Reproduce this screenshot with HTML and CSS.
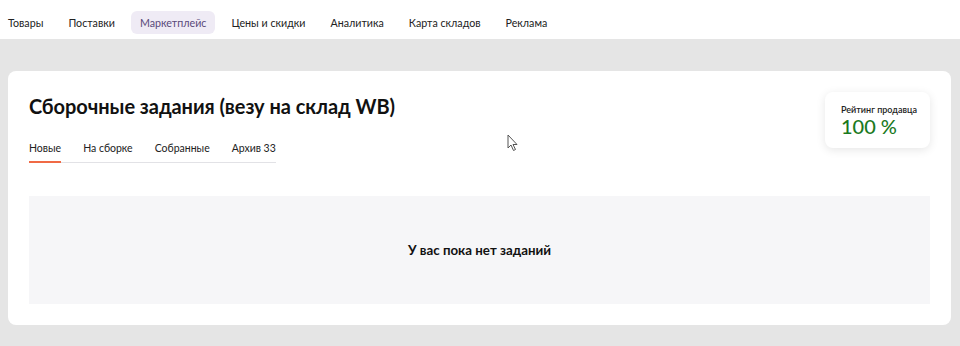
FILE: index.html
```html
<!DOCTYPE html>
<html lang="ru">
<head>
<meta charset="utf-8">
<link rel="stylesheet" href="styles.css">
</head>
<body>
<nav class="topnav">
  <a class="nav-item">Товары</a>
  <a class="nav-item">Поставки</a>
  <a class="nav-item active">Маркетплейс</a>
  <a class="nav-item">Цены и скидки</a>
  <a class="nav-item">Аналитика</a>
  <a class="nav-item">Карта складов</a>
  <a class="nav-item">Реклама</a>
</nav>
<main class="page">
  <section class="card">
    <div class="card-head">
      <div class="head-left">
        <h1 class="title">Сборочные задания (везу на склад WB)</h1>
        <div class="tabs">
          <span class="tab active">Новые</span>
          <span class="tab">На сборке</span>
          <span class="tab">Собранные</span>
          <span class="tab">Архив 33</span>
        </div>
      </div>
      <div class="rating">
        <div class="rating-label">Рейтинг продавца</div>
        <div class="rating-value">100 %</div>
      </div>
    </div>
    <div class="empty">У вас пока нет заданий</div>
  </section>
</main>
<svg class="cursor" width="12" height="18" viewBox="0 0 12 18"><path d="M1 1 L1 14 L4 11 L6.5 16.5 L8.5 15.5 L6 10.5 L10 10.5 Z" fill="#fff" stroke="#555" stroke-width="1"/></svg>
</body>
</html>
```
FILE: styles.css
```css
* { box-sizing: border-box; }
html, body { margin: 0; padding: 0; }
body {
  background: #e5e5e5;
  font-family: Lato, "Noto Sans", sans-serif;
  color: #1f1f1f;
  width: 960px;
  height: 346px;
  overflow: hidden;
  position: relative;
}
.topnav {
  height: 39px;
  background: #fff;
  display: flex;
  align-items: center;
  gap: 7px;
  padding-left: 0;
}
.nav-item {
  font-size: 10.7px;
  line-height: 23px;
  padding: 0 9px;
  border-radius: 6px;
  color: #222;
  white-space: nowrap;
  margin-top: 5px;
}
.nav-item:first-child { margin-left: -1px; }
.nav-item.active {
  background: #efebf5;
  color: #5a4a7a;
}
.page {
  padding: 32px 9px 0 8px;
}
.card {
  background: #fff;
  border-radius: 8px;
  padding: 21px 21px 21px 21px;
  height: 254px;
}
.card-head {
  display: flex;
  justify-content: space-between;
  align-items: flex-start;
}
.title {
  margin: 0;
  font-size: 20px;
  line-height: 28px;
  font-weight: 700;
  color: #111;
  letter-spacing: -0.05px;
}
.tabs {
  display: inline-flex;
  gap: 22px;
  margin-top: 21px;
  border-bottom: 1px solid #e2e2e6;
}
.tab {
  font-size: 10.5px;
  line-height: 14px;
  padding-bottom: 6px;
  color: #222;
  border-bottom: 2px solid transparent;
  margin-bottom: -1px;
}
.tab.active { border-bottom-color: #f06a45; }
.rating {
  width: 105px;
  height: 56px;
  border-radius: 8px;
  background: #fff;
  box-shadow: 0 2px 10px rgba(0,0,0,0.10);
  padding: 12px 0 0 16px;
}
.rating-label {
  font-size: 9px;
  line-height: 11px;
  color: #222;
  font-weight: 600;
}
.rating-value {
  font-size: 20px;
  line-height: 22px;
  color: #1b7a1e;
  font-weight: 500;
}
.empty {
  margin-top: 33px;
  height: 108px;
  background: #f6f6f8;
  display: flex;
  align-items: center;
  justify-content: center;
  font-size: 13.3px;
  font-weight: 700;
  color: #111;
}
.cursor {
  position: absolute;
  left: 507px;
  top: 134px;
}
```
